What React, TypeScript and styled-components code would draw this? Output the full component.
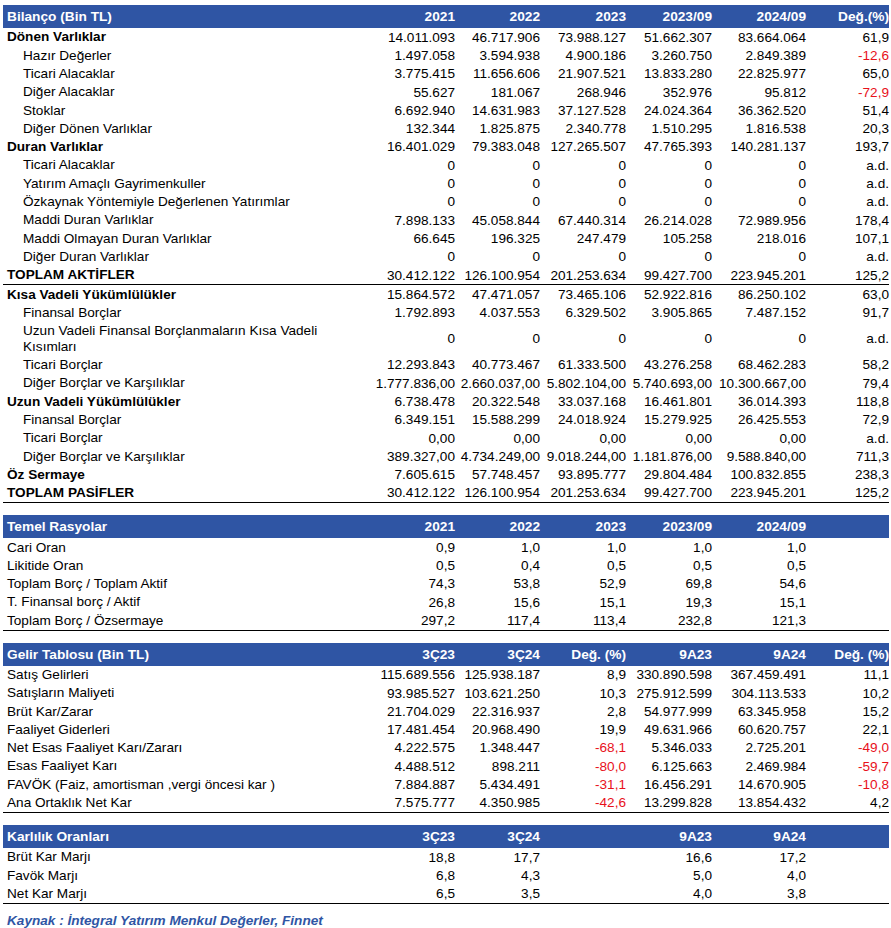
import styled, { createGlobalStyle } from "styled-components";

const GlobalStyle = createGlobalStyle`
  html, body {
    margin: 0;
    padding: 0;
    background: #ffffff;
  }
  body {
    font-family: "Liberation Sans", Arial, sans-serif;
    color: #000;
  }
`;

const COLS = "332px 120px 85px 86px 86px 94px 83px";
const BLUE = "#2f55a4";

const Page = styled.div`
  width: 886px;
  padding: 5px 0 0 3px;
  display: flex;
  flex-direction: column;
  gap: 12px;
`;

const Table = styled.div`
  display: flex;
  flex-direction: column;
  border-bottom: 1.5px solid #000;
`;

const HeaderRow = styled.div`
  display: grid;
  grid-template-columns: ${COLS};
  height: 23px;
  align-items: center;
  background: ${BLUE};
  color: #fff;
  font-weight: bold;
  font-size: 13.7px;
`;

const HeaderCell = styled.div<{ $first?: boolean }>`
  text-align: ${({ $first }) => ($first ? "left" : "right")};
  padding-left: ${({ $first }) => ($first ? "4px" : "0")};
  white-space: nowrap;
`;

const Row = styled.div<{ $tall?: boolean; $rule?: boolean }>`
  display: grid;
  grid-template-columns: ${COLS};
  min-height: ${({ $tall }) => ($tall ? "34px" : "18.3px")};
  align-items: center;
  font-size: 13.6px;
  border-bottom: ${({ $rule }) => ($rule ? "1.5px solid #000" : "none")};
`;

const Label = styled.div<{ $bold?: boolean; $indent?: boolean }>`
  font-weight: ${({ $bold }) => ($bold ? "bold" : "normal")};
  padding-left: ${({ $indent }) => ($indent ? "20px" : "4px")};
  line-height: 15.5px;
`;

const Value = styled.div<{ $neg?: boolean }>`
  text-align: right;
  white-space: nowrap;
  color: ${({ $neg }) => ($neg ? "#e8111b" : "#000")};
`;

const Source = styled.div`
  font-size: 13.6px;
  font-weight: bold;
  font-style: italic;
  color: ${BLUE};
  padding-left: 4px;
  margin-top: -3px;
`;

type Line = {
  label: string;
  values: string[];
  bold?: boolean;
  indent?: boolean;
  tall?: boolean;
  rule?: boolean;
};

const balance: Line[] = [
  { label: "Dönen Varlıklar", bold: true, values: ["14.011.093", "46.717.906", "73.988.127", "51.662.307", "83.664.064", "61,9"] },
  { label: "Hazır Değerler", indent: true, values: ["1.497.058", "3.594.938", "4.900.186", "3.260.750", "2.849.389", "-12,6"] },
  { label: "Ticari Alacaklar", indent: true, values: ["3.775.415", "11.656.606", "21.907.521", "13.833.280", "22.825.977", "65,0"] },
  { label: "Diğer Alacaklar", indent: true, values: ["55.627", "181.067", "268.946", "352.976", "95.812", "-72,9"] },
  { label: "Stoklar", indent: true, values: ["6.692.940", "14.631.983", "37.127.528", "24.024.364", "36.362.520", "51,4"] },
  { label: "Diğer Dönen Varlıklar", indent: true, values: ["132.344", "1.825.875", "2.340.778", "1.510.295", "1.816.538", "20,3"] },
  { label: "Duran Varlıklar", bold: true, values: ["16.401.029", "79.383.048", "127.265.507", "47.765.393", "140.281.137", "193,7"] },
  { label: "Ticari Alacaklar", indent: true, values: ["0", "0", "0", "0", "0", "a.d."] },
  { label: "Yatırım Amaçlı Gayrimenkuller", indent: true, values: ["0", "0", "0", "0", "0", "a.d."] },
  { label: "Özkaynak Yöntemiyle Değerlenen Yatırımlar", indent: true, values: ["0", "0", "0", "0", "0", "a.d."] },
  { label: "Maddi Duran Varlıklar", indent: true, values: ["7.898.133", "45.058.844", "67.440.314", "26.214.028", "72.989.956", "178,4"] },
  { label: "Maddi Olmayan Duran Varlıklar", indent: true, values: ["66.645", "196.325", "247.479", "105.258", "218.016", "107,1"] },
  { label: "Diğer Duran Varlıklar", indent: true, values: ["0", "0", "0", "0", "0", "a.d."] },
  { label: "TOPLAM AKTİFLER", bold: true, rule: true, values: ["30.412.122", "126.100.954", "201.253.634", "99.427.700", "223.945.201", "125,2"] },
  { label: "Kısa Vadeli Yükümlülükler", bold: true, values: ["15.864.572", "47.471.057", "73.465.106", "52.922.816", "86.250.102", "63,0"] },
  { label: "Finansal Borçlar", indent: true, values: ["1.792.893", "4.037.553", "6.329.502", "3.905.865", "7.487.152", "91,7"] },
  { label: "Uzun Vadeli Finansal Borçlanmaların Kısa Vadeli Kısımları", indent: true, tall: true, values: ["0", "0", "0", "0", "0", "a.d."] },
  { label: "Ticari Borçlar", indent: true, values: ["12.293.843", "40.773.467", "61.333.500", "43.276.258", "68.462.283", "58,2"] },
  { label: "Diğer Borçlar ve Karşılıklar", indent: true, values: ["1.777.836,00", "2.660.037,00", "5.802.104,00", "5.740.693,00", "10.300.667,00", "79,4"] },
  { label: "Uzun Vadeli Yükümlülükler", bold: true, values: ["6.738.478", "20.322.548", "33.037.168", "16.461.801", "36.014.393", "118,8"] },
  { label: "Finansal Borçlar", indent: true, values: ["6.349.151", "15.588.299", "24.018.924", "15.279.925", "26.425.553", "72,9"] },
  { label: "Ticari Borçlar", indent: true, values: ["0,00", "0,00", "0,00", "0,00", "0,00", "a.d."] },
  { label: "Diğer Borçlar ve Karşılıklar", indent: true, values: ["389.327,00", "4.734.249,00", "9.018.244,00", "1.181.876,00", "9.588.840,00", "711,3"] },
  { label: "Öz Sermaye", bold: true, values: ["7.605.615", "57.748.457", "93.895.777", "29.804.484", "100.832.855", "238,3"] },
  { label: "TOPLAM PASİFLER", bold: true, values: ["30.412.122", "126.100.954", "201.253.634", "99.427.700", "223.945.201", "125,2"] },
];

const ratios: Line[] = [
  { label: "Cari Oran", values: ["0,9", "1,0", "1,0", "1,0", "1,0", ""] },
  { label: "Likitide Oran", values: ["0,5", "0,4", "0,5", "0,5", "0,5", ""] },
  { label: "Toplam Borç / Toplam Aktif", values: ["74,3", "53,8", "52,9", "69,8", "54,6", ""] },
  { label: "T. Finansal borç / Aktif", values: ["26,8", "15,6", "15,1", "19,3", "15,1", ""] },
  { label: "Toplam Borç / Özsermaye", values: ["297,2", "117,4", "113,4", "232,8", "121,3", ""] },
];

const income: Line[] = [
  { label: "Satış Gelirleri", values: ["115.689.556", "125.938.187", "8,9", "330.890.598", "367.459.491", "11,1"] },
  { label: "Satışların Maliyeti", values: ["93.985.527", "103.621.250", "10,3", "275.912.599", "304.113.533", "10,2"] },
  { label: "Brüt Kar/Zarar", values: ["21.704.029", "22.316.937", "2,8", "54.977.999", "63.345.958", "15,2"] },
  { label: "Faaliyet Giderleri", values: ["17.481.454", "20.968.490", "19,9", "49.631.966", "60.620.757", "22,1"] },
  { label: "Net Esas Faaliyet Karı/Zararı", values: ["4.222.575", "1.348.447", "-68,1", "5.346.033", "2.725.201", "-49,0"] },
  { label: "Esas Faaliyet Karı", values: ["4.488.512", "898.211", "-80,0", "6.125.663", "2.469.984", "-59,7"] },
  { label: "FAVÖK (Faiz, amortisman ,vergi öncesi kar )", values: ["7.884.887", "5.434.491", "-31,1", "16.456.291", "14.670.905", "-10,8"] },
  { label: "Ana Ortaklık Net Kar", values: ["7.575.777", "4.350.985", "-42,6", "13.299.828", "13.854.432", "4,2"] },
];

const margins: Line[] = [
  { label: "Brüt Kar Marjı", values: ["18,8", "17,7", "", "16,6", "17,2", ""] },
  { label: "Favök Marjı", values: ["6,8", "4,3", "", "5,0", "4,0", ""] },
  { label: "Net Kar Marjı", values: ["6,5", "3,5", "", "4,0", "3,8", ""] },
];

function DataTable({ title, heads, lines }: { title: string; heads: string[]; lines: Line[] }) {
  return (
    <Table>
      <HeaderRow>
        <HeaderCell $first>{title}</HeaderCell>
        {heads.map((h, i) => (
          <HeaderCell key={i}>{h}</HeaderCell>
        ))}
      </HeaderRow>
      {lines.map((l, i) => (
        <Row key={i} $tall={l.tall} $rule={l.rule}>
          <Label $bold={l.bold} $indent={l.indent}>{l.label}</Label>
          {l.values.map((v, j) => (
            <Value key={j} $neg={v.startsWith("-")}>{v}</Value>
          ))}
        </Row>
      ))}
    </Table>
  );
}

export default function App() {
  return (
    <>
      <GlobalStyle />
      <Page>
        <DataTable
          title="Bilanço (Bin TL)"
          heads={["2021", "2022", "2023", "2023/09", "2024/09", "Değ.(%)"]}
          lines={balance}
        />
        <DataTable
          title="Temel Rasyolar"
          heads={["2021", "2022", "2023", "2023/09", "2024/09", ""]}
          lines={ratios}
        />
        <DataTable
          title="Gelir Tablosu (Bin TL)"
          heads={["3Ç23", "3Ç24", "Değ. (%)", "9A23", "9A24", "Değ. (%)"]}
          lines={income}
        />
        <DataTable
          title="Karlılık Oranları"
          heads={["3Ç23", "3Ç24", "", "9A23", "9A24", ""]}
          lines={margins}
        />
        <Source>Kaynak : İntegral Yatırım Menkul Değerler, Finnet</Source>
      </Page>
    </>
  );
}
